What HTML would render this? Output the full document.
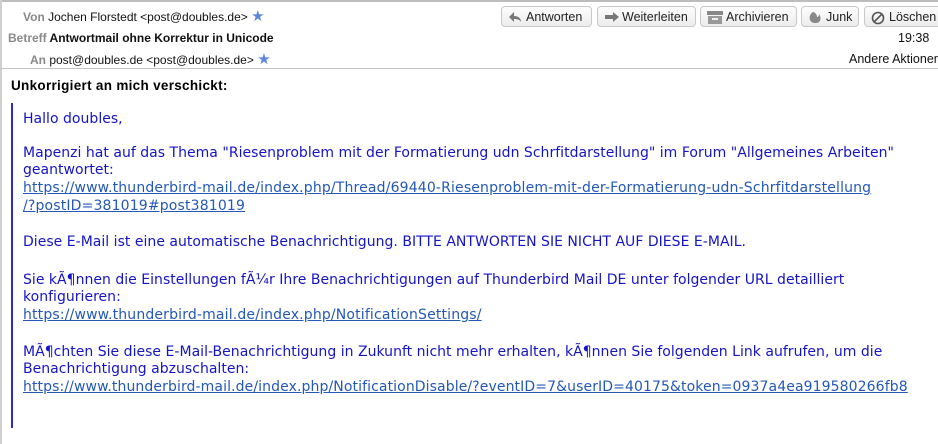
<!DOCTYPE html>
<html><head><meta charset="utf-8"><style>
body{margin:0;width:938px;height:444px;background:#fff;overflow:hidden;position:relative;font-family:"Liberation Sans",sans-serif}
.a{position:absolute;white-space:nowrap}
.h{font-size:12px;color:#111}
.l{color:#8a8a8a}
.st{color:#5b86d9;font-size:15px;line-height:12px}
.btn{position:absolute;top:6px;height:21px;border:1px solid #c8c8c8;border-radius:4px;background:linear-gradient(#fdfdfd,#ececec);font-size:12.5px;color:#222;line-height:21px;box-sizing:border-box;padding-left:24px}
.btn svg{position:absolute;left:6px;top:4px}
.b{font-family:"DejaVu Sans",Verdana,sans-serif;font-size:14px;color:#1414c8;letter-spacing:0.02px}
.u{color:#2458b8;text-decoration:underline;letter-spacing:0.16px}
</style></head><body>
<div style="position:absolute;left:0;top:0;width:938px;height:2px;background:#bdbdbd"></div>
<div style="position:absolute;left:0;top:0;width:2px;height:444px;background:#d0d0d0"></div>
<div class="a h" style="left:23px;top:10px"><span class="l" style="font-weight:bold">Von</span> Jochen Florstedt &lt;post@doubles.de&gt; <span class="st">★</span></div>
<div class="a h" style="left:8px;top:31px;font-weight:bold"><span class="l">Betreff</span> Antwortmail ohne Korrektur in Unicode</div>
<div class="a h" style="left:30px;top:53px"><span class="l" style="font-weight:bold">An</span> post@doubles.de &lt;post@doubles.de&gt; <span class="st">★</span></div>
<div class="btn" style="left:501px;width:91px"><svg width="14" height="12"><path d="M6 1L1 6l5 5V8c4 0 6 1 7 3 0-4-3-6-7-6z" fill="#777"/></svg>Antworten</div>
<div class="btn" style="left:597px;width:99px;padding-left:24px"><svg width="16" height="12"><path d="M1 4h8V1l6 5-6 5V8H1z" fill="#777"/></svg>Weiterleiten</div>
<div class="btn" style="left:700px;width:97px;padding-left:25px"><svg width="16" height="13"><rect x="0" y="0" width="16" height="4" fill="#888"/><rect x="1" y="5" width="14" height="8" fill="#999"/><rect x="5" y="7" width="6" height="2" fill="#eee"/></svg>Archivieren</div>
<div class="btn" style="left:801px;width:58px"><svg width="14" height="13"><path d="M5 1C2 3 1 6 2 9c1 3 6 4 9 2 2-2 2-5 0-8 0 2-1 3-2 3 0-2-1-4-4-5z" fill="#888"/></svg>Junk</div>
<div class="btn" style="left:864px;width:80px"><svg width="14" height="14"><circle cx="7" cy="7" r="5.5" fill="none" stroke="#555" stroke-width="1.6"/><path d="M3 11L11 3" stroke="#555" stroke-width="1.6"/></svg>Löschen</div>
<div class="a h" style="left:898px;top:31px;font-size:12.5px">19:38</div>
<div class="a h" style="left:849px;top:52px;font-size:12.5px">Andere Aktionen</div>
<div style="position:absolute;left:0;top:68px;width:938px;height:1px;background:#c4c4c4"></div>
<div class="a" style="left:11px;top:78px;font-size:13.5px;font-weight:bold;color:#000;letter-spacing:0.3px">Unkorrigiert an mich verschickt:</div>
<div style="position:absolute;left:11px;top:103px;width:2px;height:325px;background:#2a2ad0"></div>
<div class="b">
<div class="a" style="left:23px;top:111px">Hallo doubles,</div>
<div class="a" style="left:23px;top:145px">Mapenzi hat auf das Thema "Riesenproblem mit der Formatierung udn Schrfitdarstellung" im Forum "Allgemeines Arbeiten"</div>
<div class="a" style="left:23px;top:162px">geantwortet:</div>
<div class="a u" style="left:23px;top:180px">https://www.thunderbird-mail.de/index.php/Thread/69440-Riesenproblem-mit-der-Formatierung-udn-Schrfitdarstellung</div>
<div class="a u" style="left:23px;top:198px">/?postID=381019#post381019</div>
<div class="a" style="left:23px;top:234px">Diese E-Mail ist eine automatische Benachrichtigung. BITTE ANTWORTEN SIE NICHT AUF DIESE E-MAIL.</div>
<div class="a" style="left:23px;top:272px">Sie kÃ¶nnen die Einstellungen fÃ¼r Ihre Benachrichtigungen auf Thunderbird Mail DE unter folgender URL detailliert</div>
<div class="a" style="left:23px;top:289px">konfigurieren:</div>
<div class="a u" style="left:23px;top:307px">https://www.thunderbird-mail.de/index.php/NotificationSettings/</div>
<div class="a" style="left:23px;top:344px">MÃ¶chten Sie diese E-Mail-Benachrichtigung in Zukunft nicht mehr erhalten, kÃ¶nnen Sie folgenden Link aufrufen, um die</div>
<div class="a" style="left:23px;top:361px">Benachrichtigung abzuschalten:</div>
<div class="a u" style="left:23px;top:379px;letter-spacing:0.1px">https://www.thunderbird-mail.de/index.php/NotificationDisable/?eventID=7&amp;userID=40175&amp;token=0937a4ea919580266fb8</div>
</div>
</body></html>
